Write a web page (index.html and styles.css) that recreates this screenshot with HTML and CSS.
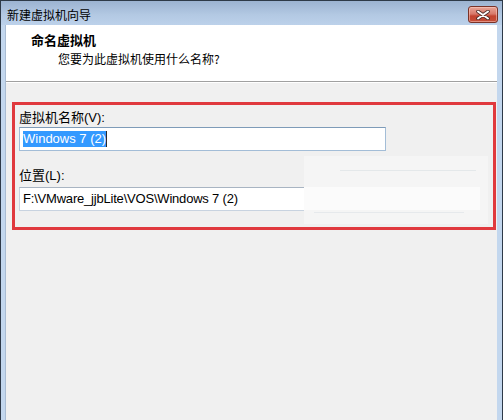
FILE: index.html
```html
<!DOCTYPE html>
<html lang="zh-CN">
<head>
<meta charset="utf-8">
<title>新建虚拟机向导</title>
<link rel="stylesheet" href="styles.css">
</head>
<body>
<div class="window">
  <div class="titlebar">
    <span class="title">新建虚拟机向导</span>
    <button class="close" aria-label="关闭">
      <svg width="14" height="10" viewBox="0 0 14 10">
        <path d="M2 1.5 L12 8.5 M12 1.5 L2 8.5" stroke="#4a2a26" stroke-width="3.6" stroke-linecap="round"/>
        <path d="M2 1.5 L12 8.5 M12 1.5 L2 8.5" stroke="#ffffff" stroke-width="2" stroke-linecap="round"/>
      </svg>
    </button>
  </div>
  <div class="client">
    <div class="header">
      <div class="heading">命名虚拟机</div>
      <div class="subheading">您要为此虚拟机使用什么名称?</div>
    </div>
    <div class="body">
      <div class="highlight-box">
        <div class="label">虚拟机名称(V):</div>
        <div class="field field-name"><span class="selected">Windows 7 (2)</span><span class="caret"></span></div>
        <div class="label label-loc">位置(L):</div>
        <div class="field field-loc">F:\VMware_jjbLite\VOS\Windows 7 (2)</div>
        <div class="erased">
          <div class="erased-line l1"></div>
          <div class="erased-band"></div>
          <div class="erased-line l2"></div>
        </div>
      </div>
    </div>
  </div>
</div>
</body>
</html>
```

FILE: styles.css
```css
* { box-sizing: border-box; }
html, body { margin: 0; padding: 0; }
body {
  width: 503px;
  height: 420px;
  overflow: hidden;
  font-family: "Liberation Sans", "Noto Sans CJK SC", sans-serif;
  font-size: 12px;
  color: #000;
  background: #bfd3ea;
}
.window {
  height: 420px;
  display: flex;
  flex-direction: column;
  border: 1px solid #2e3a48;
  border-bottom: none;
  background: linear-gradient(#9cb3d1 0px, #b3c9e3 14px, #bcd1ea 24px, #c3d7ee 24px, #c3d7ee 100%);
}
.titlebar {
  height: 24px;
  display: flex;
  align-items: center;
  justify-content: space-between;
  padding: 0 4px 0 6px;
  flex: none;
}
.title {
  font-family: "Noto Sans CJK SC", sans-serif;
  font-size: 12px;
  line-height: 16px;
  color: #000;
  margin-top: 3px;
}
.close {
  width: 30px;
  height: 17px;
  margin-top: 3px;
  padding: 0;
  border: 1px solid #7a3328;
  border-radius: 3px;
  background: linear-gradient(#e8a597 0px, #d8796a 7px, #c2432f 9px, #c5503a 16px);
  box-shadow: inset 0 0 0 1px rgba(255, 210, 200, 0.5);
  display: flex;
  align-items: center;
  justify-content: center;
}
.client {
  flex: 1;
  margin: 0 5px 0 4px;
  background: #f0f0f0;
  border-left: 1px solid #a9bcd3;
  display: flex;
  flex-direction: column;
}
.header {
  height: 57px;
  background: #ffffff;
  border-bottom: 1px solid #a0a0a0;
  padding: 7px 0 0 25px;
  font-family: "Noto Sans CJK SC", sans-serif;
  flex: none;
}
.heading {
  font-size: 13px;
  font-weight: bold;
  line-height: 16px;
}
.subheading {
  font-size: 12px;
  line-height: 16px;
  margin: 3px 0 0 27px;
}
.body {
  padding: 19px 0 0 6px;
  border-top: 1px solid #ffffff;
}
.highlight-box {
  position: relative;
  width: 484px;
  border: 3px solid #e0393e;
  padding: 5px 0 16px 4px;
}
.label {
  font-family: "Liberation Sans", "Noto Sans CJK SC", sans-serif;
  font-size: 13px;
  line-height: 16px;
  height: 16px;
}
.label-loc { margin-top: 17px; }
.field {
  height: 24px;
  background: #ffffff;
  border: 1px solid #c8d3e0;
  border-top-color: #a8b4c2;
  padding: 3px 0 0 3px;
  font-size: 13px;
  line-height: 16px;
  white-space: nowrap;
  display: flex;
  align-items: flex-start;
}
.field-name {
  margin-top: 1px;
  width: 367px;
  border-color: #a3bdd7;
  border-top-color: #7e9bb8;
}
.field-loc {
  margin-top: 3px;
  width: 463px;
  letter-spacing: -0.2px;
}
.selected {
  background: #3399ff;
  color: #ffffff;
  height: 16px;
}
.caret {
  width: 1px;
  height: 16px;
  background: #2a2a2a;
}
.erased {
  position: absolute;
  left: 289px;
  top: 51px;
  width: 184px;
  height: 68px;
  background: #f5f5f5;
}
.erased-band {
  position: absolute;
  left: 0;
  top: 31px;
  width: 176px;
  height: 23px;
  background: #fbfbfb;
}
.erased-line {
  position: absolute;
  height: 1px;
  background: #e4e8ea;
}
.erased-line.l1 { left: 36px; top: 14px; width: 136px; }
.erased-line.l2 { left: 10px; top: 56px; width: 150px; background: #e6e9ec; }
```
